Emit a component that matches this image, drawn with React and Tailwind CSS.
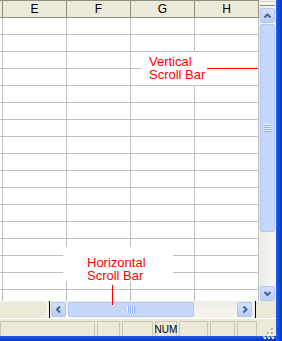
import React from "react";

const COLS = ["E", "F", "G", "H"];
const ROWS = Array.from({ length: 17 }, (_, i) => i);

const ARROWS = {
  up: "M3.5 8.5 L6.5 5.5 L9.5 8.5",
  down: "M3.5 5 L6.5 8 L9.5 5",
  left: "M8 3.5 L5 6.5 L8 9.5",
  right: "M5.5 3.5 L8.5 6.5 L5.5 9.5",
};

function ScrollButton({ dir }) {
  return (
    <div className="flex h-[15px] w-[15px] shrink-0 items-center justify-center rounded-[2px] border border-[#B4C7F3] bg-gradient-to-b from-[#D4E1FD] to-[#B8CDFA]">
      <svg width="13" height="13" viewBox="0 0 13 13">
        <path d={ARROWS[dir]} fill="none" stroke="#4D6185" strokeWidth="2" />
      </svg>
    </div>
  );
}

function Grip({ vertical }) {
  const lines = [0, 1, 2, 3];
  if (vertical) {
    return (
      <div className="flex flex-col">
        {lines.map((i) => (
          <div key={i} className="flex flex-col">
            <div className="h-[1px] w-[7px] bg-[#EEF4FE]" />
            <div className="h-[1px] w-[7px] bg-[#8CAEF6]" />
          </div>
        ))}
      </div>
    );
  }
  return (
    <div className="flex">
      {lines.map((i) => (
        <div key={i} className="flex">
          <div className="h-[7px] w-[1px] bg-[#EEF4FE]" />
          <div className="h-[7px] w-[1px] bg-[#8CAEF6]" />
        </div>
      ))}
    </div>
  );
}

function Thumb({ vertical, className }) {
  return (
    <div
      className={`flex shrink-0 items-center justify-center rounded-[2px] border border-[#B4C7F3] bg-[#C6D7FC] ${className}`}
    >
      <Grip vertical={vertical} />
    </div>
  );
}

function Sheet() {
  return (
    <div className="h-[301px] w-[259px] overflow-hidden bg-white">
      <div className="flex h-[18px] border-y border-[#918E7E] bg-[#EBEADB] text-[12px] text-black">
        <div className="w-[3px] shrink-0 border-r border-[#918E7E]" />
        {COLS.map((c) => (
          <div
            key={c}
            className="flex w-[64px] shrink-0 items-center justify-center border-r border-[#918E7E]"
          >
            {c}
          </div>
        ))}
      </div>
      {ROWS.map((r) => (
        <div key={r} className="flex h-[17px] border-b border-[#C0C0C0]">
          <div className="w-[3px] shrink-0 border-r border-[#C0C0C0]" />
          {COLS.map((c) => (
            <div key={c} className="w-[64px] shrink-0 border-r border-[#C0C0C0]" />
          ))}
        </div>
      ))}
    </div>
  );
}

function VScroll() {
  return (
    <div className="flex h-[301px] w-[17px] flex-col items-center bg-gradient-to-r from-[#EEEDE5] to-[#F6F5F0] pt-[1px]">
      <div className="h-[5px] w-[15px] border-t border-b border-t-[#D6D3C4] border-b-[#8E8B7B] bg-[#F7F6F1]" />
      <div className="mt-[2px]">
        <ScrollButton dir="up" />
      </div>
      <Thumb vertical className="mt-[1px] h-[208px] w-[15px]" />
      <div className="flex-1" />
      <ScrollButton dir="down" />
    </div>
  );
}

function HScroll() {
  return (
    <div className="flex h-[17px] bg-[#ECE9D8]">
      <div className="w-[46px] shrink-0 border-t border-[#F5F4EA]" />
      <div className="w-[4px] shrink-0 border-r border-black bg-[#F5F4EA]" />
      <div className="flex w-[205px] shrink-0 items-center bg-gradient-to-b from-[#EEEDE5] to-[#F6F5F0] pl-[1px] pr-[3px]">
        <ScrollButton dir="left" />
        <Thumb className="ml-[2px] h-[15px] w-[126px]" />
        <div className="flex-1" />
        <ScrollButton dir="right" />
      </div>
      <div className="w-[1px] shrink-0 bg-black" />
      <div className="flex-1 bg-[#ECE9D8]" />
    </div>
  );
}

function StatusBar() {
  const panels = [95, 23, 31, 22, 29, 25, 20];
  return (
    <div className="flex h-[18px] items-end gap-[2px] border-t border-white bg-[#ECE9D8] pt-[3px] text-[10px] text-black">
      {panels.map((w, i) => (
        <div
          key={i}
          className="flex h-[15px] shrink-0 items-center justify-center border-x border-t border-[#C9C6B4]"
          style={{ width: w }}
        >
          {i === 3 ? "NUM" : ""}
        </div>
      ))}
      <div className="flex flex-1 justify-end self-stretch pr-[1px] pt-[6px]">
        <svg width="12" height="11" viewBox="0 0 12 11">
          {[
            [8, 0],
            [4, 4],
            [8, 4],
            [0, 8],
            [4, 8],
            [8, 8],
          ].map(([x, y], i) => (
            <g key={i}>
              <rect x={x + 1} y={y + 1} width="2" height="2" fill="#FFFFFF" />
              <rect x={x} y={y} width="2" height="2" fill="#B3AF9C" />
            </g>
          ))}
        </svg>
      </div>
    </div>
  );
}

export default function App() {
  return (
    <div
      className="flex h-[341px] w-[282px] overflow-hidden bg-white"
      style={{ fontFamily: '"Liberation Sans", Arial, sans-serif' }}
    >
      <div className="flex w-[276px] shrink-0 flex-col">
        <div className="relative flex h-[336px] flex-col">
          <div className="flex">
            <Sheet />
            <VScroll />
          </div>
          <HScroll />
          <StatusBar />

          <div className="absolute left-[141px] top-[52px] h-[33px] w-[66px] bg-white pl-[8px] pt-[3px] text-[13px] leading-[13px] text-[#FF0000]">
            Vertical
            <br />
            Scroll Bar
          </div>
          <div className="absolute left-[207px] top-[68px] h-[1px] w-[51px] bg-[#FF0000]" />

          <div className="absolute left-[63px] top-[247px] h-[34px] w-[110px] bg-white pl-[24px] pt-[9px] text-[13px] leading-[13px] text-[#FF0000]">
            Horizontal
            <br />
            Scroll Bar
          </div>
          <div className="absolute left-[112px] top-[285px] h-[20px] w-[1px] bg-[#FF0000]" />
        </div>
        <div className="h-[5px] bg-gradient-to-b from-[#1E5EEC] to-[#0A33C2]" />
      </div>
      <div className="w-[6px] shrink-0 bg-gradient-to-r from-[#1E5EEC] to-[#0A33C2]" />
    </div>
  );
}
